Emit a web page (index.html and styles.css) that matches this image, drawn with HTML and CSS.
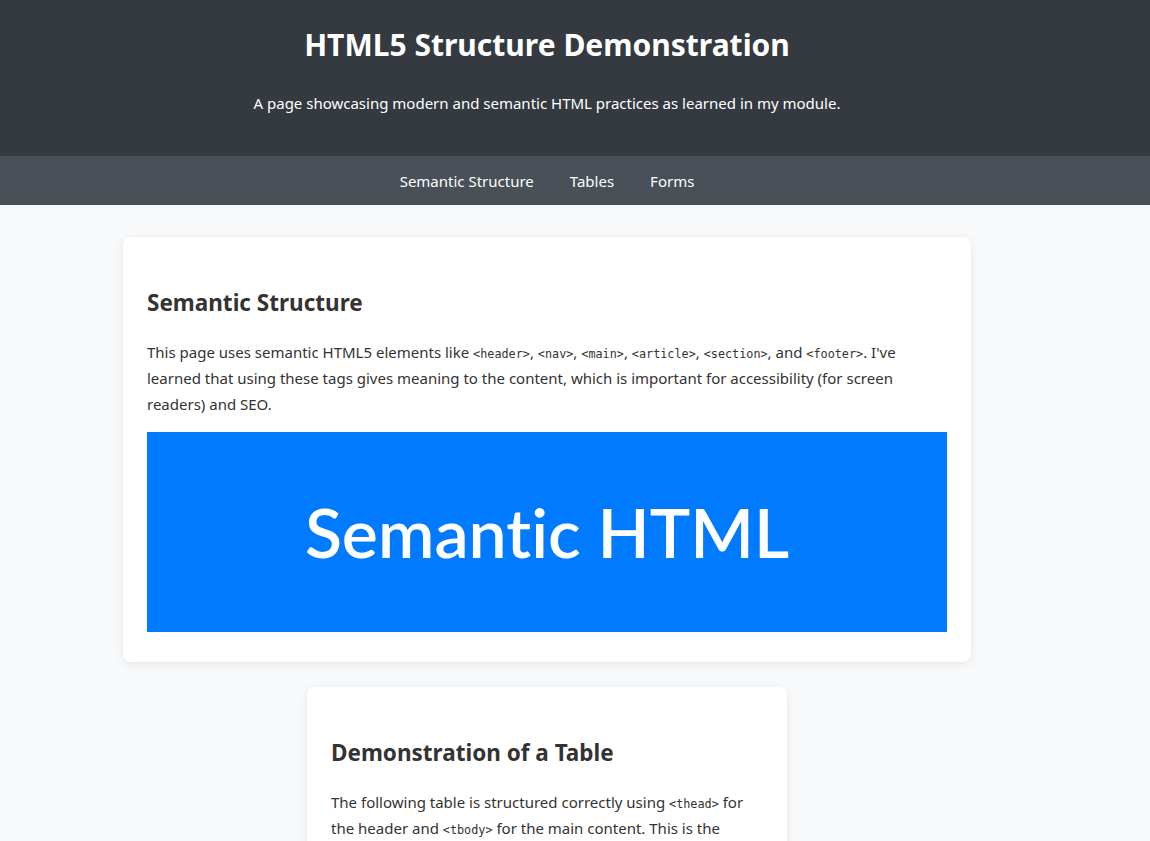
FILE: index.html
```html
<!DOCTYPE html>
<html lang="en">
<head>
<meta charset="utf-8">
<title>HTML5 Structure Demonstration</title>
<link rel="stylesheet" href="styles.css">
</head>
<body>
<header class="site-header">
  <h1 class="site-title">HTML5 Structure Demonstration</h1>
  <p class="site-subtitle">A page showcasing modern and semantic HTML practices as learned in my module.</p>
</header>
<nav class="site-nav">
  <a href="#semantic">Semantic Structure</a>
  <a href="#tables">Tables</a>
  <a href="#forms">Forms</a>
</nav>
<main class="content">
  <article class="card card-wide" id="semantic">
    <h2 class="card-title">Semantic Structure</h2>
    <p class="card-text">This page uses semantic HTML5 elements like <code>&lt;header&gt;</code>, <code>&lt;nav&gt;</code>, <code>&lt;main&gt;</code>, <code>&lt;article&gt;</code>, <code>&lt;section&gt;</code>, and <code>&lt;footer&gt;</code>. I've learned that using these tags gives meaning to the content, which is important for accessibility (for screen readers) and SEO.</p>
    <div class="banner">Semantic HTML</div>
  </article>
  <section class="card card-narrow" id="tables">
    <h2 class="card-title">Demonstration of a Table</h2>
    <p class="card-text">The following table is structured correctly using <code>&lt;thead&gt;</code> for the header and <code>&lt;tbody&gt;</code> for the main content. This is the recommended way to present tabular data.</p>
    <table class="data-table">
      <thead><tr><th>Element</th><th>Purpose</th></tr></thead>
      <tbody>
        <tr><td>header</td><td>Introductory content</td></tr>
        <tr><td>nav</td><td>Navigation links</td></tr>
        <tr><td>main</td><td>Main content</td></tr>
      </tbody>
    </table>
  </section>
</main>
</body>
</html>
```
FILE: styles.css
```css
* { box-sizing: border-box; }
html, body { margin: 0; padding: 0; }
body {
  font-family: "Noto Sans", "Open Sans", sans-serif;
  font-size: 15px;
  color: #333;
  background: #f8f9fa;
  line-height: 1.6;
}
.site-header {
  background: #343a40;
  color: #fff;
  padding: 24px 56px 26px 0;
  text-align: center;
  height: 156px;
}
.site-title {
  margin: 0;
  font-size: 30px;
  font-weight: 700;
  line-height: 42px;
}
.site-subtitle {
  margin: 26px 0 0;
  font-size: 15px;
  line-height: 22px;
}
.site-nav {
  background: #495057;
  height: 49px;
  display: flex;
  justify-content: center;
  align-items: center;
  gap: 36px;
  padding-right: 56px;
}
.site-nav a {
  color: #fff;
  text-decoration: none;
  font-size: 15px;
}
.content {
  width: 1094px;
  display: flex;
  flex-direction: column;
  align-items: center;
  gap: 25px;
  padding: 32px 0 40px;
}
.card {
  background: #fff;
  border-radius: 8px;
  box-shadow: 0 2px 10px rgba(0, 0, 0, 0.08);
  padding: 27px 24px 30px;
}
.card-wide { width: 848px; }
.card-narrow { width: 480px; }
.card-title {
  margin: 24px 0 22px;
  font-size: 22.5px;
  font-weight: 700;
  line-height: 29px;
  color: #333;
}
.card-text {
  margin: 0 0 15px;
  line-height: 26px;
}
code {
  font-family: "DejaVu Sans Mono", monospace;
  font-size: 11.8px;
  line-height: 1;
}
.banner {
  width: 800px;
  height: 200px;
  background: #007bff;
  color: #fff;
  font-family: "Lato", sans-serif;
  font-size: 68px;
  font-weight: 600;
  font-variant-ligatures: none;
  display: flex;
  align-items: center;
  justify-content: center;
}
.data-table {
  width: 100%;
  border-collapse: collapse;
}
.data-table th, .data-table td {
  border: 1px solid #dee2e6;
  padding: 8px;
  text-align: left;
}
.data-table th { background: #343a40; color: #fff; }
```
